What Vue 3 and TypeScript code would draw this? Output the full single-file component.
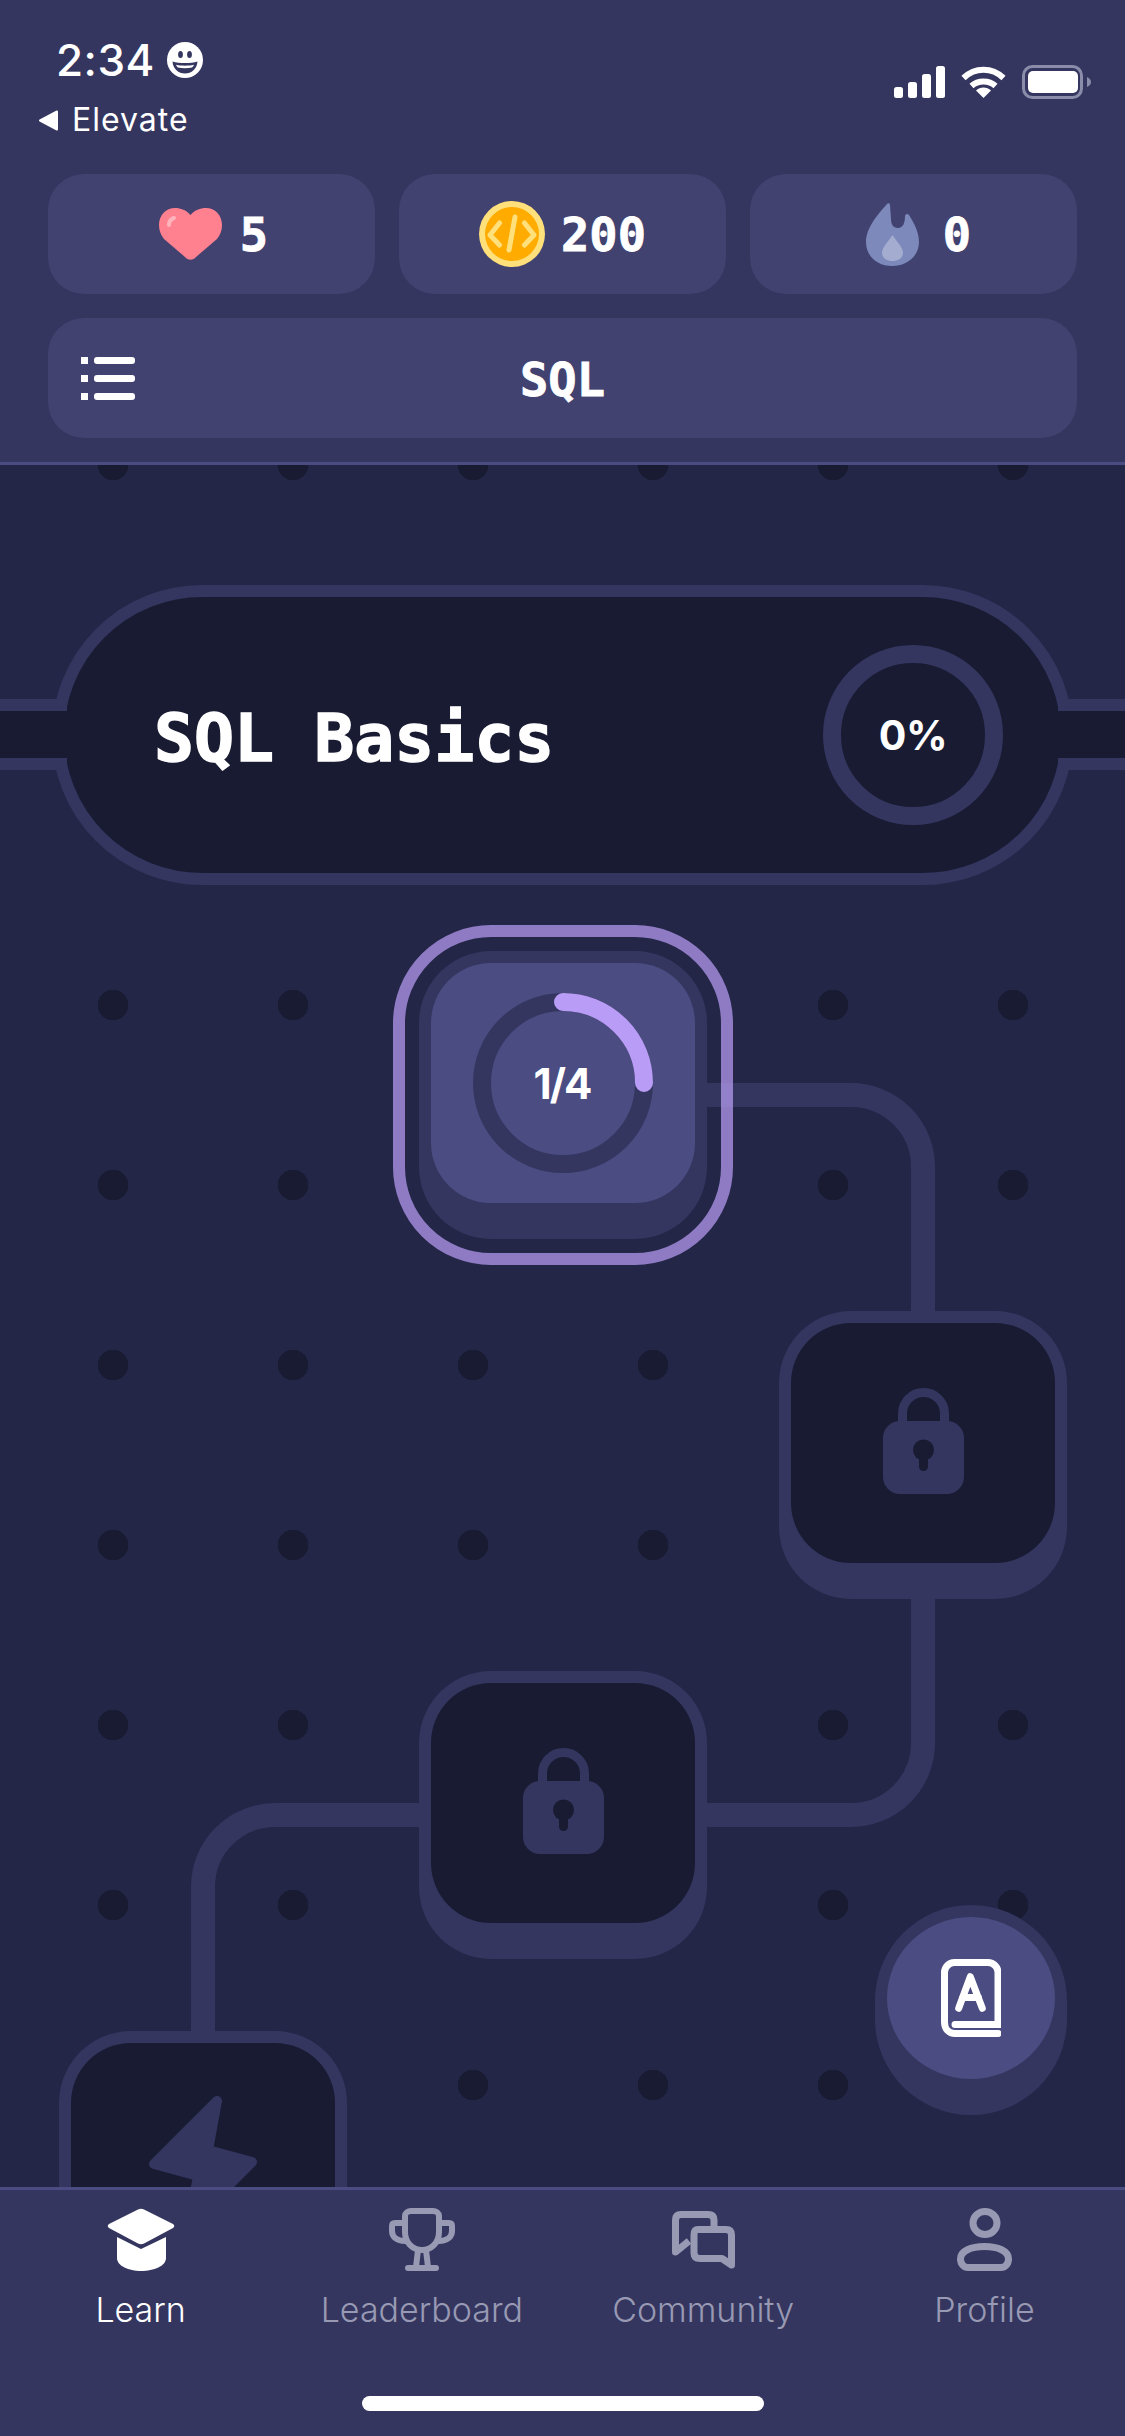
<script setup lang="ts">
type Node = { id: number; left: number; top: number; kind: 'active' | 'lock' | 'bolt' }
type Tab = { label: string; active?: boolean }

// canvas positions are page y minus the 465px header
const nodes: Node[] = [
  { id: 1, left: 419, top: 486, kind: 'active' },
  { id: 2, left: 779, top: 846, kind: 'lock' },
  { id: 3, left: 419, top: 1206, kind: 'lock' },
  { id: 4, left: 59, top: 1566, kind: 'bolt' },
]

const tabs: Tab[] = [
  { label: 'Learn', active: true },
  { label: 'Leaderboard' },
  { label: 'Community' },
  { label: 'Profile' },
]
</script>

<template>
  <div class="screen">
    <header class="header">
      <div class="status">
        <div class="status-left">
          <div class="time-row">
            <span class="time">2:34</span>
            <svg class="emoji" width="36" height="36" viewBox="0 0 36 36">
              <circle cx="18" cy="18" r="18" fill="#fff" />
              <ellipse cx="13.5" cy="12.5" rx="2.4" ry="3.6" fill="#34365f" />
              <ellipse cx="22.5" cy="12.5" rx="2.4" ry="3.6" fill="#34365f" />
              <path d="M5.5 19.5C12 21.5 24 21.5 30.5 19.5C30 27 24.5 31.5 18 31.5C11.5 31.5 6 27 5.5 19.5Z" fill="#34365f" />
              <path d="M9 22.8C14 24 22 24 27 22.8C26.4 24.4 25.8 25 25 25.6C21 26.4 15 26.4 11 25.6C10.2 25 9.6 24.4 9 22.8Z" fill="#fff" />
            </svg>
          </div>
          <div class="back-row">
            <svg width="21" height="21" viewBox="0 0 21 21">
              <path d="M19 1.5V19.5L2 10.5Z" fill="#fff" stroke="#fff" stroke-width="2" stroke-linejoin="round" />
            </svg>
            <span class="back-label">Elevate</span>
          </div>
        </div>
        <div class="status-right">
          <svg width="51" height="32" viewBox="0 0 51 32">
            <rect x="0" y="21" width="9" height="11" rx="2.5" fill="#fff" />
            <rect x="14" y="16" width="9" height="16" rx="2.5" fill="#fff" />
            <rect x="28" y="8" width="9" height="24" rx="2.5" fill="#fff" />
            <rect x="42" y="0" width="9" height="32" rx="2.5" fill="#fff" />
          </svg>
          <svg width="45" height="32" viewBox="0 0 45 32">
            <path d="M2.5 12C14 1 31 1 42.5 12" fill="none" stroke="#fff" stroke-width="6" />
            <path d="M10.5 20C17 14 28 14 34.5 20" fill="none" stroke="#fff" stroke-width="6" />
            <path d="M22.5 32L15 24.5C19 20.5 26 20.5 30 24.5Z" fill="#fff" />
          </svg>
          <svg width="69" height="34" viewBox="0 0 69 34">
            <rect x="1.5" y="1.5" width="58" height="31" rx="9" fill="none" stroke="#8b8ca9" stroke-width="3" />
            <rect x="6" y="6" width="50" height="22" rx="5" fill="#fff" />
            <path d="M65 12C67.5 13 69 15 69 17C69 19 67.5 21 65 22Z" fill="#8b8ca9" />
          </svg>
        </div>
      </div>

      <div class="stats">
        <div class="pill pill-hearts">
          <svg width="63" height="52" viewBox="0 0 63 52">
            <path d="M31.5 7C27 2 22 0 16 0C7 0 0 7 0 17C0 23 2 27 5 31L26 49C29 52.5 34 52.5 37 49L58 31C61 27 63 23 63 17C63 7 56 0 47 0C41 0 36 2 31.5 7Z" fill="#ff808f" />
            <path d="M10 17C10 13 12 11 15 10" fill="none" stroke="#ffb3bc" stroke-width="4" stroke-linecap="round" />
          </svg>
          <span class="mono">5</span>
        </div>
        <div class="pill">
          <svg width="66" height="66" viewBox="0 0 66 66">
            <circle cx="33" cy="33" r="33" fill="#ffe07a" />
            <circle cx="33" cy="33" r="27" fill="#ffab00" />
            <path d="M20.5 22L11 34L20.5 44M45.5 22L55 34L45.5 44M36 16L30 49" fill="none" stroke="#ffe07a" stroke-width="5" stroke-linecap="round" stroke-linejoin="round" />
          </svg>
          <span class="mono">200</span>
        </div>
        <div class="pill pill-streak">
          <svg width="53" height="63" viewBox="0 0 53 63">
            <path d="M24 2C24 0 22 0 21 1C12 11 0 25 0 39C0 53 11 63 26 63C41 63 53 53 53 39C53 29 48 20 43 12C42 10 39 11 39 13C39 20 37 25 32 25C27 25 25 21 25 16Z" fill="#7c89ba" />
            <path d="M26.5 32C22 39 16 44 16 50C16 55 21 58 26.5 58C32 58 37 55 37 50C37 44 31 39 26.5 32Z" fill="#a4acd0" />
          </svg>
          <span class="mono">0</span>
        </div>
      </div>

      <div class="course-pill">
        <svg width="54" height="43" viewBox="0 0 54 43">
          <rect x="0" y="0" width="7" height="7" fill="#fff" />
          <rect x="0" y="18" width="7" height="7" fill="#fff" />
          <rect x="0" y="36" width="7" height="7" fill="#fff" />
          <rect x="13" y="0" width="41" height="7" rx="3" fill="#fff" />
          <rect x="13" y="18" width="41" height="7" rx="3" fill="#fff" />
          <rect x="13" y="36" width="41" height="7" rx="3" fill="#fff" />
        </svg>
        <span class="mono course-title">SQL</span>
        <span></span>
      </div>
    </header>

    <main class="canvas">
      <svg class="paths" width="1125" height="1722" viewBox="0 465 1125 1722">
        <path d="M700 1095H851A72 72 0 0 1 923 1167V1743A72 72 0 0 1 851 1815H275A72 72 0 0 0 203 1887V2040" fill="none" stroke="#34365f" stroke-width="24" />
      </svg>

      <div class="banner">
        <span class="banner-title">SQL Basics</span>
        <div class="banner-ring">0%</div>
      </div>
      <div class="strip strip-left"></div>
      <div class="strip strip-right"></div>

      <div
        v-for="node in nodes"
        :key="node.id"
        class="node"
        :style="{ left: node.left + 'px', top: node.top + 'px' }"
      >
        <div v-if="node.kind === 'active'" class="node-ring"></div>
        <div class="node-face" :class="{ 'node-face-active': node.kind === 'active' }">
          <div v-if="node.kind === 'active'" class="progress">
            <svg width="180" height="180" viewBox="0 0 180 180">
              <circle cx="90" cy="90" r="81" fill="none" stroke="#34365f" stroke-width="18" />
              <path d="M90 9A81 81 0 0 1 171 90" fill="none" stroke="#b99cf5" stroke-width="18" stroke-linecap="round" />
            </svg>
            <span class="progress-label">1/4</span>
          </div>
          <svg v-else-if="node.kind === 'lock'" class="lock" width="81" height="106" viewBox="0 0 81 106">
            <path d="M19.5 38V25.5a21 21 0 0 1 42 0V38" fill="none" stroke="#34365f" stroke-width="9" />
            <rect x="0" y="33" width="81" height="73" rx="17" fill="#34365f" />
            <circle cx="40.5" cy="62" r="10.5" fill="#191b33" />
            <rect x="36" y="62" width="9" height="21" rx="4.5" fill="#191b33" />
          </svg>
          <svg v-else class="bolt" width="110" height="134" viewBox="0 0 110 134">
            <path d="M69 5L6 68L50 80L41 129L104 66L60 54Z" fill="#34365f" stroke="#34365f" stroke-width="10" stroke-linejoin="round" />
          </svg>
        </div>
      </div>

      <div class="fab">
        <div class="fab-face">
          <svg width="60" height="78" viewBox="0 0 60 78">
            <path d="M3.5 63V13.5A10 10 0 0 1 13.5 3.5H47A10 10 0 0 1 57 13.5V65.5H14M3.5 63C3.5 70 8 74.5 14 74.5H57" fill="none" stroke="#fff" stroke-width="7" stroke-linecap="round" />
            <path d="M17.7 49.3L29.3 17.7L41.3 49.3M21.5 38.5H37.5" fill="none" stroke="#fff" stroke-width="7" stroke-linecap="round" stroke-linejoin="round" />
          </svg>
        </div>
      </div>
    </main>

    <nav class="tabbar">
      <div class="tabs">
        <div v-for="tab in tabs" :key="tab.label" class="tab" :class="{ 'tab-active': tab.active }">
          <div class="tab-icon">
            <svg v-if="tab.label === 'Learn'" width="68" height="63" viewBox="0 0 68 63">
              <path d="M31 1.5Q34 0 37 1.5L66 16Q68.5 18 66 20L37 35.5Q34 37 31 35.5L2 20Q-.5 18 2 16Z" fill="#fff" />
              <path d="M10 29L34 41L59 29V50C59 58 47 63 34 63C22 63 10 58 10 50Z" fill="#fff" />
            </svg>
            <svg v-else-if="tab.label === 'Leaderboard'" width="66" height="63" viewBox="0 0 66 63">
              <g fill="none" stroke="#9899b3" stroke-width="6" stroke-linecap="round" stroke-linejoin="round">
                <path d="M16 8C16 5 19 3 22 3H44C47 3 50 5 50 8V24C50 35 42 42 33 42C24 42 16 35 16 24Z" />
                <path d="M16 15H6C4 15 3 16 3 18V23C3 29 8 33 16 33M50 15H60C62 15 63 16 63 18V23C63 29 58 33 50 33" />
                <path d="M29 42L27 59M37 42L39 59M19 60H47" />
              </g>
            </svg>
            <svg v-else-if="tab.label === 'Community'" width="63" height="60" viewBox="0 0 63 60">
              <g fill="none" stroke="#9899b3" stroke-width="7" stroke-linejoin="round">
                <path d="M42 15V9Q42 3.5 36 3.5H9Q3.5 3.5 3.5 9V41L17 30" />
                <path d="M26 18.5H54Q59.5 18.5 59.5 24V54L50 47.5H28Q22 47.5 22 42V24Q22 18.5 26 18.5Z" />
              </g>
            </svg>
            <svg v-else width="55" height="63" viewBox="0 0 55 63">
              <g fill="none" stroke="#9899b3" stroke-width="7">
                <ellipse cx="28" cy="15" rx="12" ry="11.5" />
                <path d="M3.5 51C3.5 43 14 38.5 27.5 38.5C41 38.5 51.5 43 51.5 51C51.5 56 48 59.5 44 59.5H11C7 59.5 3.5 56 3.5 51Z" />
              </g>
            </svg>
          </div>
          <span class="tab-label">{{ tab.label }}</span>
        </div>
      </div>
      <div class="home-bar"></div>
    </nav>
  </div>
</template>

<style scoped>
.screen {
  width: 1125px;
  height: 2436px;
  display: flex;
  flex-direction: column;
  overflow: hidden;
  background: #232647;
  color: #fff;
  font-family: Inter, "Liberation Sans", sans-serif;
}

.header {
  height: 465px;
  flex: none;
  box-sizing: border-box;
  background: #34365f;
  border-bottom: 3px solid #4a4c82;
}

.status {
  height: 174px;
  display: flex;
  justify-content: space-between;
  padding: 0 34px 0 38px;
}

.time-row {
  display: flex;
  align-items: center;
  gap: 12px;
  height: 36px;
  margin-top: 42px;
  padding-left: 18px;
}

.time {
  font-size: 44px;
  line-height: 36px;
  font-weight: 500;
  letter-spacing: 0.5px;
}

.back-row {
  display: flex;
  align-items: center;
  gap: 13px;
  height: 30px;
  margin-top: 27px;
}

.back-label {
  font-size: 32px;
  line-height: 30px;
  letter-spacing: 1px;
}

.status-right {
  display: flex;
  align-items: flex-start;
  gap: 16px;
  padding-top: 65px;
}

.status-right svg:first-child,
.status-right svg:nth-child(2) {
  margin-top: 1px;
}

.stats {
  display: grid;
  grid-template-columns: repeat(3, 1fr);
  gap: 24px;
  padding: 0 48px;
}

.pill {
  height: 120px;
  display: flex;
  align-items: center;
  justify-content: center;
  gap: 16px;
  border-radius: 36px;
  background: #414270;
}

.pill-hearts {
  gap: 18px;
  padding-left: 4px;
}

.pill-streak {
  gap: 24px;
  padding-left: 10px;
}

.mono {
  font-family: "DejaVu Sans Mono", "Liberation Mono", monospace;
  font-size: 47px;
  font-weight: 700;
  -webkit-text-stroke: 0.8px #fff;
}

.course-pill {
  height: 120px;
  margin: 24px 48px 0;
  padding: 0 33px;
  display: grid;
  grid-template-columns: 1fr auto 1fr;
  align-items: center;
  border-radius: 36px;
  background: #414270;
}

.course-title {
  padding-top: 2px;
}

.canvas {
  position: relative;
  flex: none;
  height: 1722px;
  overflow: hidden;
  background-color: #232647;
  background-image: radial-gradient(circle, #191b33 15px, transparent 15.6px);
  background-size: 180px 180px;
  background-position: 23px -90px;
}

.paths {
  position: absolute;
  left: 0;
  top: 0;
}

.banner {
  position: absolute;
  left: 52px;
  top: 120px;
  width: 1021px;
  height: 300px;
  box-sizing: border-box;
  padding: 0 58px 0 90px;
  display: flex;
  align-items: center;
  justify-content: space-between;
  border: 12px solid #34365f;
  border-radius: 150px;
  background: #191b33;
}

.banner-title {
  padding-top: 5px;
  font-family: "DejaVu Sans Mono", "Liberation Mono", monospace;
  font-size: 66.5px;
  font-weight: 700;
  -webkit-text-stroke: 1.4px #fff;
}

.banner-ring {
  width: 180px;
  height: 180px;
  box-sizing: border-box;
  display: flex;
  align-items: center;
  justify-content: center;
  border: 18px solid #34365f;
  border-radius: 50%;
  font-size: 41px;
  font-weight: 700;
  letter-spacing: -0.5px;
}

.strip {
  position: absolute;
  top: 234px;
  width: 67px;
  height: 71px;
  box-sizing: border-box;
  background: #191b33;
  border-top: 12px solid #34365f;
  border-bottom: 12px solid #34365f;
}

.strip-left {
  left: 0;
}

.strip-right {
  right: 0;
}

.node {
  position: absolute;
  width: 288px;
  height: 288px;
  box-sizing: border-box;
  padding: 12px 12px 36px;
  border-radius: 72px;
  background: #34365f;
}

.node-ring {
  position: absolute;
  inset: -26px;
  border: 12px solid rgba(185, 156, 245, 0.72);
  border-radius: 98px;
}

.node-face {
  height: 240px;
  display: flex;
  align-items: center;
  justify-content: center;
  overflow: hidden;
  border-radius: 60px;
  background: #191b33;
}

.node-face-active {
  background: #4a4c82;
}

.progress {
  position: relative;
  width: 180px;
  height: 180px;
}

.progress svg {
  display: block;
}

.progress-label {
  position: absolute;
  inset: 0 2px 0 0;
  display: flex;
  align-items: center;
  justify-content: center;
  font-size: 42px;
  font-weight: 700;
  letter-spacing: -2px;
}

.lock {
  margin-bottom: 4px;
}

.bolt {
  flex: none;
}

.fab {
  position: absolute;
  left: 875px;
  top: 1440px;
  width: 192px;
  height: 210px;
  box-sizing: border-box;
  padding: 12px 12px 36px;
  border-radius: 96px;
  background: #34365f;
}

.fab-face {
  height: 162px;
  display: flex;
  align-items: center;
  justify-content: center;
  border-radius: 50%;
  background: #4a4c82;
}

.tabbar {
  flex: 1;
  box-sizing: border-box;
  background: #34365f;
  border-top: 3px solid #4a4c82;
  display: flex;
  flex-direction: column;
  align-items: center;
}

.tabs {
  width: 100%;
  display: grid;
  grid-template-columns: repeat(4, 1fr);
  padding-top: 18px;
}

.tab {
  display: flex;
  flex-direction: column;
  align-items: center;
  gap: 19px;
  color: #9899b3;
}

.tab-icon {
  height: 63px;
  display: flex;
  align-items: flex-end;
}

.tab-icon svg {
  display: block;
}

.tab-active {
  color: #fff;
}

.tab-label {
  font-size: 34px;
  line-height: 40px;
  font-weight: 300;
}

.home-bar {
  width: 402px;
  height: 15px;
  margin-top: 66px;
  border-radius: 8px;
  background: #fff;
}
</style>
